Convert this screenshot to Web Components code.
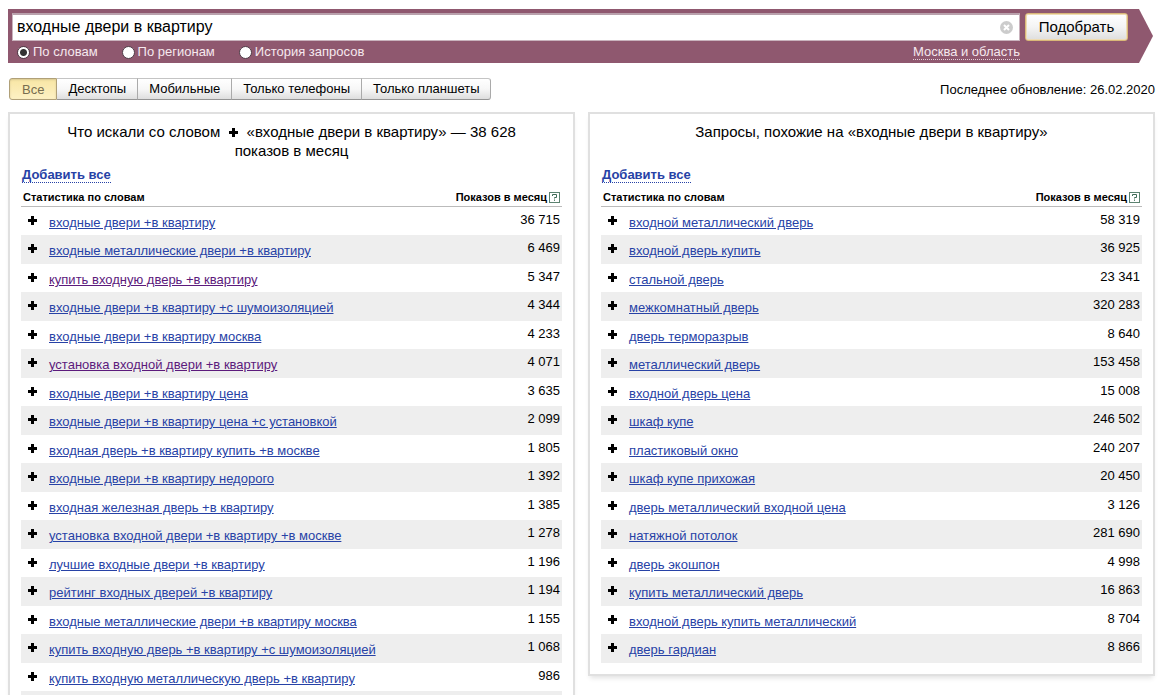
<!DOCTYPE html>
<html lang="ru">
<head>
<meta charset="utf-8">
<title>Подбор слов</title>
<style>
  body { margin: 0; background: #fff; color: #000; font-family: "Liberation Sans", Arial, sans-serif; font-size: 13px; }
</style>
</head>
<body>
<stat-page></stat-page>
<script>
const define = (name, html, setup) => {
  const template = document.createElement('template');
  template.innerHTML = html;
  customElements.define(name, class extends HTMLElement {
    constructor() {
      super();
      this.attachShadow({ mode: 'open' }).append(template.content.cloneNode(true));
    }
    connectedCallback() {
      if (setup && !this.ready) { this.ready = true; setup(this, this.shadowRoot); }
    }
  });
};

const wordRows = [
  ['входные двери +в квартиру', '36 715'],
  ['входные металлические двери +в квартиру', '6 469'],
  ['купить входную дверь +в квартиру', '5 347', true],
  ['входные двери +в квартиру +с шумоизоляцией', '4 344'],
  ['входные двери +в квартиру москва', '4 233'],
  ['установка входной двери +в квартиру', '4 071', true],
  ['входные двери +в квартиру цена', '3 635'],
  ['входные двери +в квартиру цена +с установкой', '2 099'],
  ['входная дверь +в квартиру купить +в москве', '1 805'],
  ['входные двери +в квартиру недорого', '1 392'],
  ['входная железная дверь +в квартиру', '1 385'],
  ['установка входной двери +в квартиру +в москве', '1 278'],
  ['лучшие входные двери +в квартиру', '1 196'],
  ['рейтинг входных дверей +в квартиру', '1 194'],
  ['входные металлические двери +в квартиру москва', '1 155'],
  ['купить входную дверь +в квартиру +с шумоизоляцией', '1 068'],
  ['купить входную металлическую дверь +в квартиру', '986'],
  null
];
const similarRows = [
  ['входной металлический дверь', '58 319'],
  ['входной дверь купить', '36 925'],
  ['стальной дверь', '23 341'],
  ['межкомнатный дверь', '320 283'],
  ['дверь терморазрыв', '8 640'],
  ['металлический дверь', '153 458'],
  ['входной дверь цена', '15 008'],
  ['шкаф купе', '246 502'],
  ['пластиковый окно', '240 207'],
  ['шкаф купе прихожая', '20 450'],
  ['дверь металлический входной цена', '3 126'],
  ['натяжной потолок', '281 690'],
  ['дверь экошпон', '4 998'],
  ['купить металлический дверь', '16 863'],
  ['входной дверь купить металлический', '8 704'],
  ['дверь гардиан', '8 866']
];

define('plus-icon', `
  <style>
    :host { display: inline-block; width: 10px; height: 10px; }
    svg { display: block; }
  </style>
  <svg width="10" height="10" viewBox="0 0 10 10" aria-hidden="true"><path d="M4 0h3v3h3v3H7v3H4V6H1V3h3z" fill="#000"/></svg>
`);

define('radio-option', `
  <style>
    :host { display: block; }
    label { display: flex; align-items: center; gap: 3px; color: #f6e8ee; line-height: 16px; }
    input { appearance: none; box-sizing: border-box; width: 13px; height: 13px; margin: 0; border: 1px solid #4f3c47; border-radius: 50%; background: #fff; }
    input:checked { background: radial-gradient(circle, #333 0 3px, #fff 4px); }
  </style>
  <label><input type="radio"><span><slot></slot></span></label>
`, (host, root) => { root.querySelector('input').checked = host.hasAttribute('checked'); });

define('search-bar', `
  <style>
    :host { display: block; background: #8f586f; padding: 4px 25px 0 4px; height: 50px; margin-right: 2px;
      clip-path: polygon(0 0, calc(100% - 14px) 0, 100% 50%, calc(100% - 14px) 100%, 0 100%); }
    form { display: grid; grid-template-columns: 1fr 103px; column-gap: 5px; margin: 0; }
    .field { display: flex; align-items: center; box-sizing: border-box; height: 28px; background: #fff; border: 1px solid #c9b3bd; border-top: 2px solid #b9a1ac; padding: 0 6px 1px 0; }
    .field input { flex: 1; min-width: 0; border: 0; padding: 0 0 0 4px; outline: 0; background: none; font: 16px/22px "Liberation Sans", Arial, sans-serif; color: #000; }
    .clear { border: 0; padding: 0; background: none; width: 13px; height: 13px; }
    .clear svg { display: block; }
    .submit { height: 28px; padding: 0; border: 1px solid #d9b878; border-radius: 3px; background: linear-gradient(#fff, #f4f4f4 50%, #dedede); box-shadow: inset 0 0 0 1px #efdcb4; font: 15px/24px "Liberation Sans", Arial, sans-serif; color: #000; }
    .options { display: flex; align-items: center; height: 22px; padding-left: 5px; }
    .options radio-option { margin-right: 24px; }
    .region { margin-left: auto; color: #f6e8ee; text-decoration: none; line-height: 15px; border-bottom: 1px dotted #e3cdd7; }
  </style>
  <form>
    <div class="field">
      <input type="text" aria-label="Слова" value="входные двери в квартиру">
      <button class="clear" type="button" aria-label="Очистить"><svg width="13" height="13" viewBox="0 0 13 13"><circle cx="6.5" cy="6.5" r="6.500" fill="#ccc"/><path d="M4 4l5 5M9 4l-5 5" stroke="#fff" stroke-width="2"/></svg></button>
    </div>
    <button class="submit" type="button">Подобрать</button>
    <div class="options">
      <radio-option checked>По словам</radio-option>
      <radio-option>По регионам</radio-option>
      <radio-option>История запросов</radio-option>
      <a class="region" href="#region">Москва и область</a>
    </div>
  </form>
`);

define('device-tabs', `
  <style>
    :host { display: flex; }
    button { box-sizing: border-box; height: 22px; padding: 0 11px; border: 1px solid #aaa; border-color: #c4c4c4 #aaa #959595; border-left-width: 0; background: linear-gradient(#fff, #f7f7f7 50%, #dedede); font: 13px/18px "Liberation Sans", Arial, sans-serif; color: #000; white-space: nowrap; }
    button[aria-pressed] { padding: 1px 12px 0; border: 1px solid #b0a078; border-radius: 3px 0 0 3px; background: linear-gradient(#f8e6a4, #fdf1c4); box-shadow: inset 0 1px 2px #d8c894; color: #776d50; }
    button:last-of-type { border-radius: 0 3px 3px 0; }
  </style>
  <button type="button" aria-pressed="true">Все</button><button type="button">Десктопы</button><button type="button">Мобильные</button><button type="button">Только телефоны</button><button type="button">Только планшеты</button>
`);

define('stat-panel', `
  <style>
    :host { display: block; border: 2px solid #e0e0e0; padding: 8px 11px 11px; background: #fff; box-shadow: 0 4px 5px -2px rgba(0,0,0,.12); }
    h2 { margin: 0; padding: 0 36px; height: 46px; font-size: 15px; line-height: 19px; font-weight: normal; text-align: center; }
    .all { display: block; width: fit-content; margin-left: 1px; color: #2742a6; font-size: 13px; line-height: 14px; font-weight: bold; text-decoration: none; border-bottom: 1px dotted #2742a6; }
    table { width: 100%; border-collapse: separate; border-spacing: 0; }
    th { box-sizing: border-box; height: 24px; padding: 0 2px 2px; border-bottom: 1px solid #bbb; font-size: 11px; line-height: 14px; vertical-align: bottom; white-space: nowrap; }
    th:first-child { text-align: left; }
    .count { display: flex; justify-content: flex-end; align-items: center; gap: 2px; }
    .help { width: 11px; height: 11px; display: block; }
    td { box-sizing: border-box; height: 28px; padding: 0; vertical-align: top; line-height: 15px; }
    tr:nth-child(even) td { height: 29px; background: #eee; }
    .plus { width: 28px; padding: 9px 0 0 6px; }
    .plus button { display: block; border: 0; padding: 0; background: none; }
    .plus plus-icon { display: block; }
    .word { padding-top: 8px; }
    .word a { color: #2742a6; }
    .word a.visited { color: #5c1a7c; }
    .num { width: 110px; padding: 5px 2px 0 0; text-align: right; white-space: nowrap; }
  </style>
  <h2><slot></slot></h2>
  <a class="all" href="#all">Добавить все</a>
  <table>
    <thead><tr><th colspan="2" scope="col">Статистика по словам</th><th scope="col"><div class="count"><span>Показов в месяц</span><svg class="help" viewBox="0 0 11 11" aria-hidden="true"><rect x=".5" y=".5" width="10" height="10" fill="#fff" stroke="#5b8270"/><path d="M3.500 4V2.500h4v3h-2v1M5.500 7.500v1.300" fill="none" stroke="#3f6b57"/></svg></div></th></tr></thead>
    <tbody></tbody>
  </table>
`, (host, root) => {
  const rows = host.getAttribute('data') === 'words' ? wordRows : similarRows;
  root.querySelector('tbody').innerHTML = rows.map(row => row
    ? `<tr><td class="plus"><button type="button" aria-label="Добавить"><plus-icon></plus-icon></button></td><td class="word"><a href="#word"${row[2] ? ' class="visited"' : ''}>${row[0]}</a></td><td class="num">${row[1]}</td></tr>`
    : '<tr><td class="plus"></td><td class="word"></td><td class="num"></td></tr>').join('');
});

define('stat-page', `
  <style>
    :host { display: block; box-sizing: border-box; height: 100vh; padding: 9px 6px 0 8px; overflow-y: auto; scrollbar-width: none; }
    .bar { display: flex; justify-content: space-between; align-items: center; padding: 15px 0 0 1px; }
    .columns { display: grid; grid-template-columns: 1fr 1fr; gap: 13px; align-items: start; margin-top: 12px; }
    plus-icon { margin: 0 4px -1px; }
  </style>
  <search-bar></search-bar>
  <div class="bar"><device-tabs></device-tabs><span>Последнее обновление: 26.02.2020</span></div>
  <div class="columns">
    <stat-panel data="words">Что искали со словом <plus-icon></plus-icon> «входные двери в квартиру» — 38 628 показов в месяц</stat-panel>
    <stat-panel data="similar">Запросы, похожие на «входные двери в квартиру»</stat-panel>
  </div>
`);
</script>
</body>
</html>
